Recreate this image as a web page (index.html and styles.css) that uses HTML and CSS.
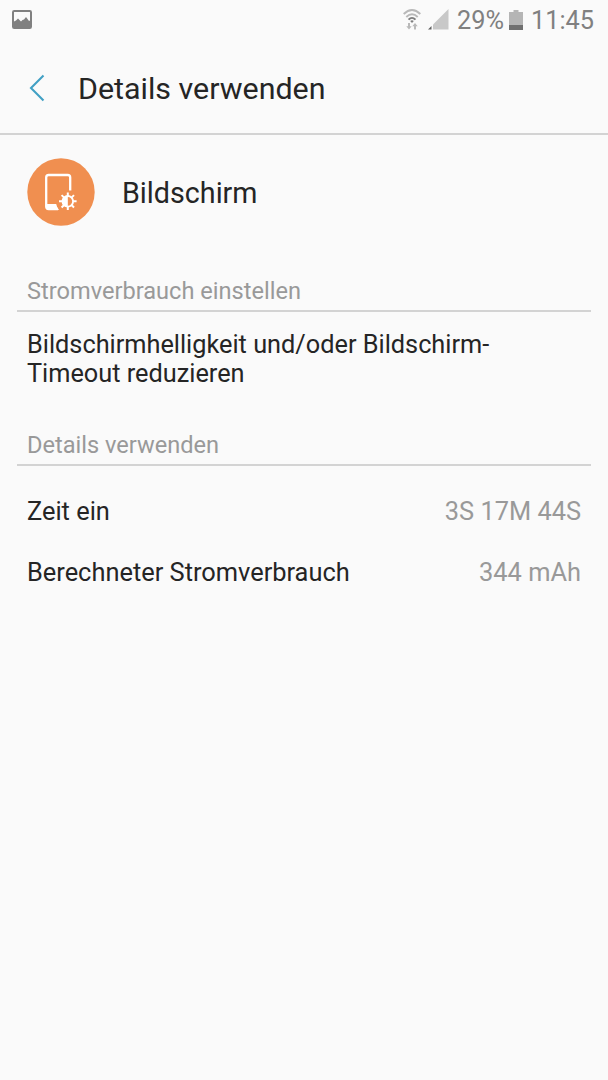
FILE: index.html
```html
<!DOCTYPE html>
<html lang="de">
<head>
    <meta charset="UTF-8">
    <meta name="viewport" content="width=device-width, initial-scale=1.0">
    <title>Details verwenden</title>
    <link rel="stylesheet" href="styles.css">
</head>
<body>
    <div class="status-bar">
        <svg class="icon-picture" width="20" height="19" viewBox="0 0 20 19">
            <rect x="1" y="1" width="18" height="17" rx="1.2" fill="#fafafa" stroke="#808080" stroke-width="2"/>
            <path d="M1 12l3-1.500 2-2 3 3 1.500-1.500 1.500-.5 2-2.500 3 4 2-1v8H1z" fill="#808080"/>
        </svg>
        <div class="status-right">
            <svg class="icon-wifi" width="18" height="21" viewBox="0 0 18 21">
                <g fill="none" stroke-width="1.900">
                    <path d="M.7 5Q9-3 17.300 5" stroke="#b9b9b9"/>
                    <path d="M3.300 8Q9 2.500 14.700 8" stroke="#b9b9b9"/>
                    <path d="M5.500 10.700Q9 7 12.500 10.700" stroke="#7d7d7d"/>
                </g>
                <path d="M7.200 12Q9 10.700 10.800 12L9 14z" fill="#7d7d7d"/>
                <path d="M5 14v3.300H3.300L6 20.500l2.700-3.200H7V14zM11 20.500V17.200H9.300L12 14l2.700 3.200H13v3.300z" fill="#b9b9b9"/>
            </svg>
            <svg class="icon-signal" width="21" height="21" viewBox="0 0 21 21">
                <path d="M20.500 0v20.500H5V15.500z" fill="#c8c8c8"/>
                <path d="M3.500 17v3.500H0z" fill="#606060"/>
            </svg>
            <span class="percent">29%</span>
            <svg class="icon-battery" width="14" height="20" viewBox="0 0 14 20">
                <path d="M4.500 0h5v2H14v18H0V2h4.500z" fill="#b5b5b5"/>
                <path d="M0 15h14v5H0z" fill="#707070"/>
            </svg>
            <span class="clock">11:45</span>
        </div>
    </div>

    <header class="app-bar">
        <svg class="icon-back" width="16" height="28" viewBox="0 0 16 28">
            <path d="M14.500 1.500L2 14l12.500 12.500" fill="none" stroke="#41a0c4" stroke-width="2.100"/>
        </svg>
        <h1>Details verwenden</h1>
    </header>

    <main>
        <div class="app-info">
            <svg class="app-icon" width="68" height="68" viewBox="0 0 68 68">
                <circle cx="34" cy="34" r="33.700" fill="#f08f50"/>
                <path d="M43.200 32.500V19.500Q43.200 17 40.700 17H21.700Q19.200 17 19.200 19.500V48.500Q19.200 51 21.700 51H31" fill="none" stroke="#fff" stroke-width="2.300"/>
                <path d="M19.500 46h9.700q.5 3 2.800 6H22q-3 0-3-3z" fill="#fff"/>
                <circle cx="40.800" cy="43.300" r="5.300" fill="none" stroke="#fff" stroke-width="1.900"/>
                <path d="M40.800 37.500a5.800 5.800 0 0 0 0 11.600z" fill="#fff"/>
                <g stroke="#fff" stroke-width="2">
                    <path d="M40.800 34.500v3.500M40.800 48.600v3.500M32 43.300h3.500M46.100 43.300h3.500M34.600 37.100l2.500 2.500M44.500 47l2.500 2.500M34.600 49.500l2.500-2.500M44.500 39.600l2.500-2.500"/>
                </g>
            </svg>
            <span class="app-name">Bildschirm</span>
        </div>

        <section>
            <h2>Stromverbrauch einstellen</h2>
            <p class="hint">Bildschirmhelligkeit und/oder Bildschirm-Timeout reduzieren</p>
        </section>

        <section>
            <h2>Details verwenden</h2>
            <div class="row first">
                <span>Zeit ein</span>
                <span class="value">3S 17M 44S</span>
            </div>
            <div class="row">
                <span>Berechneter Stromverbrauch</span>
                <span class="value">344 mAh</span>
            </div>
        </section>
    </main>
</body>
</html>
```
FILE: styles.css
```css
:root {
    --background: #fafafa;
    --foreground: #252525;
    --muted: #999999;
    --line: #d3d3d3;
}

* {
    box-sizing: border-box;
}

body {
    margin: 0;
    min-height: 100vh;
    font-family: Roboto, "Liberation Sans", sans-serif;
    font-size: 25.3px;
    background-color: var(--background);
    color: var(--foreground);
}

svg {
    display: block;
    flex: none;
}

h1,
h2,
p {
    margin: 0;
    font-weight: 400;
}

.status-bar {
    display: flex;
    justify-content: space-between;
    height: 40px;
    padding: 0 14px 0 12px;
    color: #808080;
    line-height: 42px;
}

.icon-picture {
    margin-top: 10px;
}

.status-right {
    display: flex;
}

.icon-wifi {
    margin-top: 9px;
}

.icon-signal {
    margin: 9px 0 0 7px;
}

.percent {
    margin-left: 8px;
}

.icon-battery {
    margin: 10px 8px 0 5px;
}

.app-bar {
    display: flex;
    align-items: center;
    height: 95px;
    padding: 2px 0 0 29px;
    border-bottom: 2px solid var(--line);
}

.app-bar h1 {
    margin-left: 33px;
    padding-top: 1px;
    font-size: 30.4px;
}

.app-info {
    display: flex;
    align-items: center;
    height: 115px;
    padding-left: 27px;
}

.app-icon {
    margin-top: -2px;
}

.app-name {
    margin-left: 27px;
    font-size: 28.7px;
}

section {
    padding: 0 17px;
}

section h2 {
    height: 62px;
    padding: 27px 10px 0;
    border-bottom: 2px solid var(--line);
    color: var(--muted);
    font-size: 23.6px;
    line-height: 28px;
}

.hint {
    padding: 18px 10px 16px;
    line-height: 29px;
}

.row {
    display: flex;
    justify-content: space-between;
    align-items: center;
    height: 61.5px;
    padding: 0 10px;
    font-size: 25.4px;
}

.row.first {
    margin-top: 14px;
}

.value {
    color: var(--muted);
}
```
